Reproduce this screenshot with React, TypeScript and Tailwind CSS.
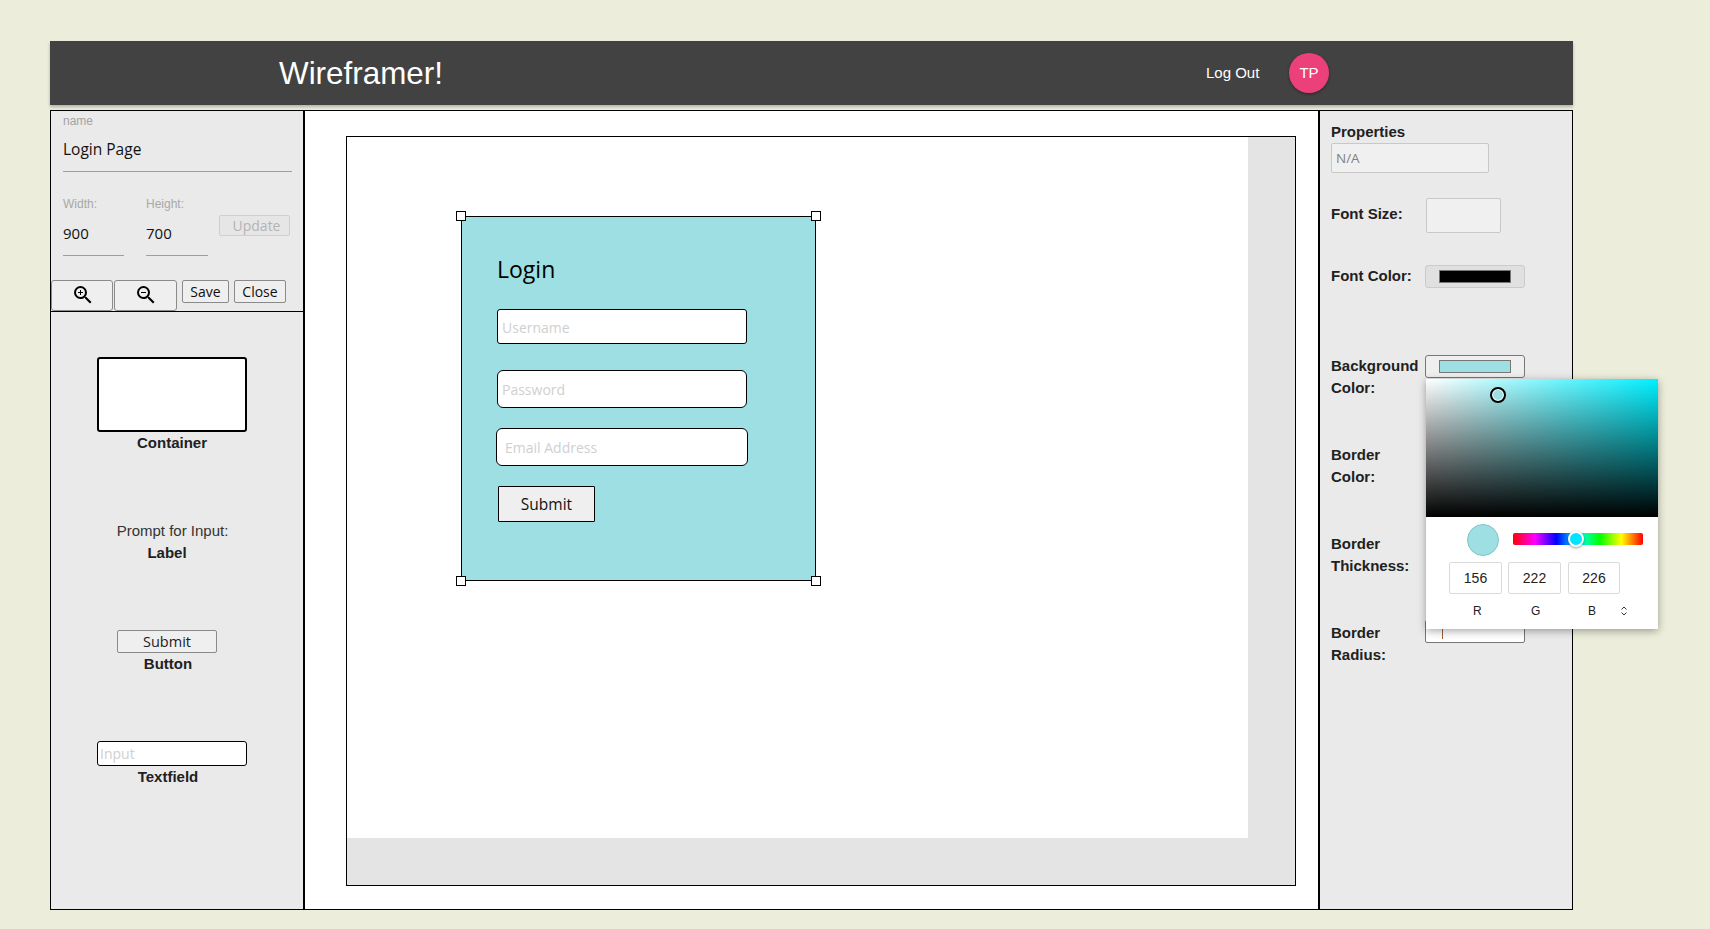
import { MdZoomIn, MdZoomOut } from "react-icons/md";

const segoe = "font-['Open_Sans','Noto_Sans',sans-serif]";
const arial = "font-['Liberation_Sans',Arial,sans-serif]";

function Handle({ className }: { className: string }) {
  return <div className={`absolute h-[10px] w-[10px] border border-black bg-white ${className}`} />;
}

function LeftPanel() {
  return (
    <aside className="flex h-full w-[254px] shrink-0 flex-col border-r-2 border-black bg-[#eaeaea]">
      <div className="h-[169px] shrink-0 px-[12px]">
        <div className="h-[20px] pt-[2px] text-[12px] leading-[16px] text-[#a3a3a3]">name</div>
        <input
          defaultValue="Login Page"
          className={`${segoe} mt-[1px] block h-[40px] w-[229px] border-b border-[#9e9e9e] bg-transparent pb-[5px] text-[15.5px] text-[#111] outline-none`}
        />
        <div className="mt-[23px] flex">
          <div className="w-[83px]">
            <div className="text-[12px] leading-[18px] text-[#a8a8a8]">Width:</div>
            <input
              defaultValue="900"
              className={`${segoe} mt-[5px] block h-[38px] w-[61px] border-b border-[#9e9e9e] bg-transparent pb-[8px] text-[15px] text-[#111] outline-none`}
            />
          </div>
          <div className="w-[73px]">
            <div className="text-[12px] leading-[18px] text-[#a8a8a8]">Height:</div>
            <input
              defaultValue="700"
              className={`${segoe} mt-[5px] block h-[38px] w-[62px] border-b border-[#9e9e9e] bg-transparent pb-[8px] text-[15px] text-[#111] outline-none`}
            />
          </div>
          <button
            disabled
            className={`${segoe} mt-[20px] h-[21px] w-[71px] rounded-[2px] border border-[#cfcfcf] bg-[#e6e6e6] pl-[4px] text-[14px] leading-[18px] text-[#b4b4b4]`}
          >
            Update
          </button>
        </div>
      </div>
      <div className="flex h-[32px] shrink-0 items-start border-b border-black">
        <button className="flex h-[31px] w-[62px] justify-center rounded-[3px] border border-[#8a8a8a] bg-[#efefef] pl-[1px] pt-[2px] text-black">
          <MdZoomIn size={24} />
        </button>
        <button className="ml-[1px] flex h-[31px] w-[63px] justify-center rounded-[3px] border border-[#8a8a8a] bg-[#efefef] pt-[2px] text-black">
          <MdZoomOut size={24} />
        </button>
        <button className={`${segoe} ml-[5px] h-[23px] w-[47px] rounded-[2px] border border-[#8a8a8a] bg-[#efefef] text-[14px] leading-[20px] text-[#111]`}>
          Save
        </button>
        <button className={`${segoe} ml-[5px] h-[23px] w-[52px] rounded-[2px] border border-[#8a8a8a] bg-[#efefef] text-[14px] leading-[20px] text-[#111]`}>
          Close
        </button>
      </div>
      <div className="flex flex-1 flex-col text-[15px] text-[#212121]">
        <div className="ml-[46px] mt-[45px] h-[75px] w-[150px] rounded-[3px] border-2 border-black bg-white" />
        <div className="mt-[1px] h-[20px] w-[242px] text-center font-bold leading-[20px]">Container</div>
        <div className="mt-[68px] h-[20px] w-[243px] text-center leading-[20px] text-[#333]">Prompt for Input:</div>
        <div className="mt-[2px] h-[20px] w-[232px] text-center font-bold leading-[20px]">Label</div>
        <button className={`${segoe} ml-[66px] mt-[67px] h-[23px] w-[100px] rounded-[2px] border border-[#8a8a8a] bg-[#efefef] text-[14.5px] leading-[20px] text-[#222]`}>
          Submit
        </button>
        <div className="mt-[1px] h-[20px] w-[234px] text-center font-bold leading-[20px]">Button</div>
        <input
          placeholder="Input"
          className={`${segoe} ml-[46px] mt-[67px] h-[25px] w-[150px] rounded-[3px] border border-black bg-white pl-[2px] text-[14px] outline-none placeholder:text-[#d0d0d0]`}
        />
        <div className="mt-[1px] h-[20px] w-[234px] text-center font-bold leading-[20px]">Textfield</div>
      </div>
    </aside>
  );
}

function Canvas() {
  return (
    <main className="min-w-0 flex-1 bg-white pl-[41px] pt-[25px]">
      <div className="h-[750px] w-[950px] border border-black bg-[#e4e4e4]">
        <div className="relative h-[701px] w-[901px] bg-white">
          <div className="absolute left-[114px] top-[79px] h-[365px] w-[355px] border border-black bg-[#9ddfe3]">
            <Handle className="-left-[6px] -top-[6px]" />
            <Handle className="-right-[6px] -top-[6px]" />
            <Handle className="-bottom-[6px] -left-[6px]" />
            <Handle className="-bottom-[6px] -right-[6px]" />
            <div className={`${segoe} absolute left-[35px] top-[36px] text-[23px] leading-[33px] text-black`}>Login</div>
            <input
              placeholder="Username"
              className={`${segoe} absolute left-[35px] top-[92px] h-[35px] w-[250px] rounded-[3px] border border-black bg-white pl-[4px] pt-[1px] text-[14px] outline-none placeholder:text-[#d0d0d0]`}
            />
            <input
              placeholder="Password"
              className={`${segoe} absolute left-[35px] top-[153px] h-[38px] w-[250px] rounded-[6px] border border-black bg-white pl-[4px] text-[14px] outline-none placeholder:text-[#d0d0d0]`}
            />
            <input
              placeholder="Email Address"
              className={`${segoe} absolute left-[34px] top-[211px] h-[38px] w-[252px] rounded-[6px] border border-black bg-white pl-[8px] text-[14px] outline-none placeholder:text-[#d0d0d0]`}
            />
            <button className={`${segoe} absolute left-[36px] top-[269px] h-[36px] w-[97px] rounded-[1px] border border-black bg-[#efefef] pt-[1px] text-[15.5px] text-[#111]`}>
              Submit
            </button>
          </div>
        </div>
      </div>
    </main>
  );
}

function SwatchButton({ color, active }: { color: string; active?: boolean }) {
  return (
    <button
      className={`flex h-[23px] w-[100px] items-center justify-center rounded-[3px] border ${
        active ? "border-[#777] bg-[#efefef]" : "border-[#cbcbcb] bg-[#e0e0e0]"
      }`}
    >
      <span className={`block h-[13px] w-[72px] border border-[#777] ${color}`} />
    </button>
  );
}

function ColorPicker() {
  return (
    <div className={`${arial} absolute left-[106px] top-[268px] h-[250px] w-[232px] bg-white font-normal shadow-[0_2px_8px_rgba(0,0,0,0.35)]`}>
      <div className="relative h-[138px] bg-[linear-gradient(to_top,#000,transparent),linear-gradient(to_right,#fff,#00f0ff)]">
        <div className="absolute left-[64px] top-[8px] h-[16px] w-[16px] rounded-full border-2 border-black bg-[#9ddfe3] shadow-[inset_0_0_0_1px_#fff]" />
      </div>
      <div className="relative">
        <div className="absolute left-[41px] top-[7px] h-[32px] w-[32px] rounded-full border border-[#83c4c8] bg-[#9ddfe3]" />
        <div className="absolute left-[87px] top-[16px] h-[12px] w-[130px] rounded-[2px] bg-[linear-gradient(to_right,#f00,#f0f,#00f,#0ff,#0f0,#ff0,#f00)]" />
        <div className="absolute left-[142px] top-[14px] h-[16px] w-[16px] rounded-full border-2 border-white bg-[#00e5ff] shadow-[0_1px_3px_rgba(0,0,0,0.4)]" />
        <div className="absolute left-[23px] top-[45px] flex">
          <input defaultValue="156" className="h-[32px] w-[53px] rounded-[2px] border border-[#dadada] text-center text-[14px] text-[#222] outline-none" />
          <input defaultValue="222" className="ml-[6px] h-[32px] w-[53px] rounded-[2px] border border-[#dadada] text-center text-[14px] text-[#222] outline-none" />
          <input defaultValue="226" className="ml-[7px] h-[32px] w-[52px] rounded-[2px] border border-[#dadada] text-center text-[14px] text-[#222] outline-none" />
        </div>
        <div className="absolute left-[47px] top-[86px] text-[12px] leading-[16px] text-[#222]">R</div>
        <div className="absolute left-[105px] top-[86px] text-[12px] leading-[16px] text-[#222]">G</div>
        <div className="absolute left-[162px] top-[86px] text-[12px] leading-[16px] text-[#222]">B</div>
        <svg className="absolute left-[194px] top-[89px]" width="8" height="10" viewBox="0 0 8 10" fill="none" stroke="#333" strokeWidth="1">
          <path d="M1.5 3.5 4 1l2.5 2.5M1.5 6.5 4 9l2.5-2.5" />
        </svg>
      </div>
    </div>
  );
}

function RightPanel() {
  return (
    <aside className="relative h-full w-[254px] shrink-0 border-l-2 border-black bg-[#eaeaea] pl-[11px] text-[15px] font-bold leading-[22px] text-[#212121]">
      <div className="pt-[10px]">Properties</div>
      <input
        defaultValue="N/A"
        disabled
        className={`${segoe} block h-[30px] w-[158px] rounded-[2px] border border-[#c8c8c8] bg-[#f0f0f0] pb-[1px] pl-[4px] text-[13.5px] font-normal text-[#808080]`}
      />
      <div className="mt-[25px] flex h-[35px] items-start">
        <div className="mt-[5px] w-[95px]">Font Size:</div>
        <input className="h-[35px] w-[75px] rounded-[2px] border border-[#c8c8c8] bg-[#f0f0f0]" />
      </div>
      <div className="mt-[32px] flex h-[23px] items-start">
        <div className="w-[94px]">Font Color:</div>
        <SwatchButton color="bg-black" />
      </div>
      <div className="mt-[67px] flex h-[44px] items-start">
        <div className="w-[94px]">Background Color:</div>
        <SwatchButton color="bg-[#9ddfe3]" active />
      </div>
      <div className="mt-[45px] h-[44px] w-[80px]">Border Color:</div>
      <div className="mt-[45px] h-[44px] w-[80px]">Border Thickness:</div>
      <div className="mt-[45px] flex h-[44px] items-start">
        <div className="w-[94px]">Border Radius:</div>
        <div className="-mt-[2px] flex h-[23px] w-[100px] items-end rounded-[2px] border border-[#777] bg-white pb-[3px] pl-[16px]">
          <span className="block h-[14px] w-[1px] bg-[#a0603a]" />
        </div>
      </div>
      <ColorPicker />
    </aside>
  );
}

export default function App() {
  return (
    <div className={`${arial} h-[929px] w-full overflow-hidden bg-[#ecedda] pl-[50px] pt-[41px]`}>
      <div className="w-[1523px]">
        <header className="flex h-[64px] items-center bg-[#424242] pl-[229px] text-white shadow-[0_2px_3px_rgba(0,0,0,0.25)]">
          <div className="w-[927px] pt-[1px] text-[31.4px] leading-[40px]">Wireframer!</div>
          <a className="w-[83px] text-[15px]">Log Out</a>
          <div className="flex h-[40px] w-[40px] items-center justify-center rounded-full bg-[#ec407a] text-[15px] shadow-[0_1px_3px_rgba(0,0,0,0.4)]">
            TP
          </div>
        </header>
        <div className="mt-[5px] flex h-[800px] border border-black">
          <LeftPanel />
          <Canvas />
          <RightPanel />
        </div>
      </div>
    </div>
  );
}
